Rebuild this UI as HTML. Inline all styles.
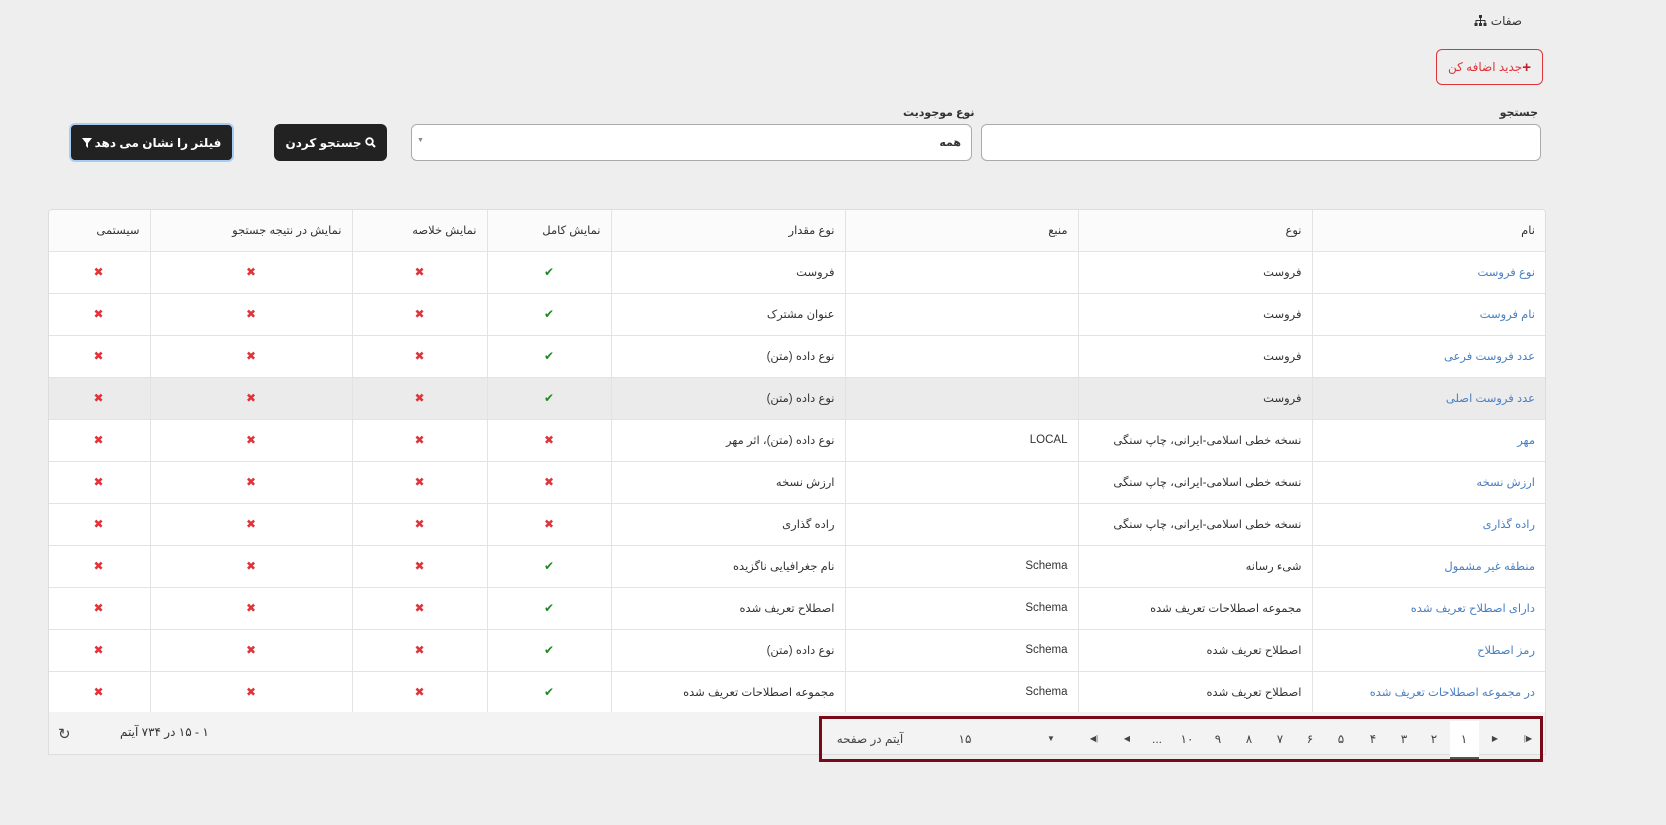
<!DOCTYPE html>
<html lang="fa" dir="rtl"><head><meta charset="utf-8">
<style>
*{box-sizing:border-box;margin:0;padding:0}
body{width:1666px;height:825px;background:#eeeeee;font-family:"Liberation Sans","DejaVu Sans",sans-serif;font-size:12px;color:#333;position:relative;overflow:hidden}
.abs{position:absolute}
.title{right:144px;top:14px;font-size:12px;color:#333;display:flex;align-items:center;gap:4px}
.addbtn{left:1436px;top:49px;width:107px;height:36px;border:1px solid #e0343a;border-radius:6px;color:#e0343a;display:flex;align-items:center;justify-content:center;font-size:12px;background:transparent}
.lbl{font-size:11px;font-weight:bold;color:#333}
.inp{background:#fff;border:1px solid #aaa;border-radius:6px}
.dark{background:#222;color:#fff;border-radius:6px;font-weight:bold;display:flex;align-items:center;justify-content:center;font-size:12px;gap:3px}
.tbl{left:48px;top:209px;width:1498px;height:546px;background:#fff;border:1px solid #ddd;border-radius:4px;overflow:hidden}
table{border-collapse:collapse;width:100%;table-layout:fixed}
th,td{border-left:1px solid #e3e3e3;border-bottom:1px solid #e3e3e3;height:42px;text-align:right;padding:0 10px;font-size:11.5px;white-space:nowrap}
th{font-weight:normal;background:#fbfbfb;height:41px;color:#333}
td.c{text-align:center}
td a{color:#4a7fc1;text-decoration:none}
tr.hl td{background:#ebebeb}
.x{color:#e0343a;font-weight:bold;font-size:12px}
.v{color:#1e8a1e;font-weight:bold;font-size:12px}
.foot{left:48px;top:712px;width:1498px;height:43px;background:#f3f3f3;border:1px solid #ddd;border-top:none}
.pager{left:819px;top:716px;width:724px;height:46px;border:3px solid #7a0a1a}
.pg{position:absolute;top:732px;font-size:12px;color:#444;width:30px;text-align:center;transform:translateX(-50%)}
</style></head><body>
<div class="abs title"><span>صفات</span>
<svg width="13" height="12" viewBox="0 0 13 12"><rect x="5" y="0" width="3" height="3" fill="#333"/><path d="M6.5 3v2.5M2 8V5.5h9V8M6.5 5.5V8" stroke="#333" fill="none"/><rect x="0.5" y="8" width="3" height="3" fill="#333"/><rect x="5" y="8" width="3" height="3" fill="#333"/><rect x="9.5" y="8" width="3" height="3" fill="#333"/></svg></div>

<div class="abs addbtn"><span style="font-weight:bold;font-size:15px;color:#c0202a">+</span>جدید اضافه کن</div>

<div class="abs lbl" style="right:128px;top:106px">جستجو</div>
<div class="abs inp" style="left:981px;top:124px;width:560px;height:37px"></div>
<div class="abs lbl" style="left:903px;top:106px">نوع موجودیت</div>
<div class="abs inp" style="left:411px;top:124px;width:561px;height:37px"><span class="abs" style="right:10px;top:11px;font-weight:bold;font-size:11px">همه</span><span class="abs" style="left:5px;top:12px;font-size:7px;color:#888">▼</span></div>
<div class="abs dark" style="left:274px;top:124px;width:113px;height:37px"><svg width="11" height="11" viewBox="0 0 11 11"><circle cx="4.5" cy="4.5" r="3.3" stroke="#fff" stroke-width="1.8" fill="none"/><path d="M7 7l3 3" stroke="#fff" stroke-width="2"/></svg>جستجو کردن</div>
<div class="abs dark" style="left:69px;top:123px;width:165px;height:39px;border:2px solid #a9cdf2">فیلتر را نشان می دهد <svg width="10" height="10" viewBox="0 0 10 10"><path d="M0 0h10L6 5v5L4 8V5z" fill="#fff"/></svg></div>

<div class="abs tbl">
<table>
<colgroup><col style="width:233px"><col style="width:234px"><col style="width:233px"><col style="width:234px"><col style="width:124px"><col style="width:135px"><col style="width:202px"><col style="width:103px"></colgroup>
<tr><th>نام</th><th>نوع</th><th>منبع</th><th>نوع مقدار</th><th>نمایش کامل</th><th>نمایش خلاصه</th><th>نمایش در نتیجه جستجو</th><th>سیستمی</th></tr>
<tr><td><a>نوع فروست</a></td><td>فروست</td><td></td><td>فروست</td><td class="c v">✔</td><td class="c x">✖</td><td class="c x">✖</td><td class="c x">✖</td></tr>
<tr><td><a>نام فروست</a></td><td>فروست</td><td></td><td>عنوان مشترک</td><td class="c v">✔</td><td class="c x">✖</td><td class="c x">✖</td><td class="c x">✖</td></tr>
<tr><td><a>عدد فروست فرعی</a></td><td>فروست</td><td></td><td>نوع داده (متن)</td><td class="c v">✔</td><td class="c x">✖</td><td class="c x">✖</td><td class="c x">✖</td></tr>
<tr class="hl"><td><a>عدد فروست اصلی</a></td><td>فروست</td><td></td><td>نوع داده (متن)</td><td class="c v">✔</td><td class="c x">✖</td><td class="c x">✖</td><td class="c x">✖</td></tr>
<tr><td><a>مهر</a></td><td>نسخه خطی اسلامی-ایرانی، چاپ سنگی</td><td>LOCAL</td><td>نوع داده (متن)، اثر مهر</td><td class="c x">✖</td><td class="c x">✖</td><td class="c x">✖</td><td class="c x">✖</td></tr>
<tr><td><a>ارزش نسخه</a></td><td>نسخه خطی اسلامی-ایرانی، چاپ سنگی</td><td></td><td>ارزش نسخه</td><td class="c x">✖</td><td class="c x">✖</td><td class="c x">✖</td><td class="c x">✖</td></tr>
<tr><td><a>راده گذاری</a></td><td>نسخه خطی اسلامی-ایرانی، چاپ سنگی</td><td></td><td>راده گذاری</td><td class="c x">✖</td><td class="c x">✖</td><td class="c x">✖</td><td class="c x">✖</td></tr>
<tr><td><a>منطقه غیر مشمول</a></td><td>شیء رسانه</td><td>Schema</td><td>نام جغرافیایی ناگزیده</td><td class="c v">✔</td><td class="c x">✖</td><td class="c x">✖</td><td class="c x">✖</td></tr>
<tr><td><a>دارای اصطلاح تعریف شده</a></td><td>مجموعه اصطلاحات تعریف شده</td><td>Schema</td><td>اصطلاح تعریف شده</td><td class="c v">✔</td><td class="c x">✖</td><td class="c x">✖</td><td class="c x">✖</td></tr>
<tr><td><a>رمز اصطلاح</a></td><td>اصطلاح تعریف شده</td><td>Schema</td><td>نوع داده (متن)</td><td class="c v">✔</td><td class="c x">✖</td><td class="c x">✖</td><td class="c x">✖</td></tr>
<tr><td><a>در مجموعه اصطلاحات تعریف شده</a></td><td>اصطلاح تعریف شده</td><td>Schema</td><td>مجموعه اصطلاحات تعریف شده</td><td class="c v">✔</td><td class="c x">✖</td><td class="c x">✖</td><td class="c x">✖</td></tr>
</table></div>
<div class="abs foot"></div>
<div class="abs" style="left:120px;top:725px;font-size:12px">۱ - ۱۵ در ۷۳۴ آیتم</div>
<div class="abs" style="left:58px;top:725px;font-size:15px;color:#444">↻</div>
<div class="abs pager"></div>
<div class="abs" style="left:1450px;top:721px;width:29px;height:38px;background:#fff;border-bottom:2px solid #555"></div>
<div class="pg" style="left:1528px;font-size:8px;top:734px">▶|</div>
<div class="pg" style="left:1495px;font-size:8px;top:734px">▶</div>
<div class="pg" style="left:1464px">۱</div>
<div class="pg" style="left:1434px">۲</div>
<div class="pg" style="left:1404px">۳</div>
<div class="pg" style="left:1373px">۴</div>
<div class="pg" style="left:1341px">۵</div>
<div class="pg" style="left:1310px">۶</div>
<div class="pg" style="left:1280px">۷</div>
<div class="pg" style="left:1249px">۸</div>
<div class="pg" style="left:1218px">۹</div>
<div class="pg" style="left:1187px">۱۰</div>
<div class="pg" style="left:1157px">...</div>
<div class="pg" style="left:1127px;font-size:8px;top:734px">◀</div>
<div class="pg" style="left:1094px;font-size:8px;top:734px">|◀</div>
<div class="pg" style="left:1051px;font-size:8px;top:734px">▼</div>
<div class="pg" style="left:965px">۱۵</div>
<div class="pg" style="left:870px;width:80px">آیتم در صفحه</div>
</body></html>
